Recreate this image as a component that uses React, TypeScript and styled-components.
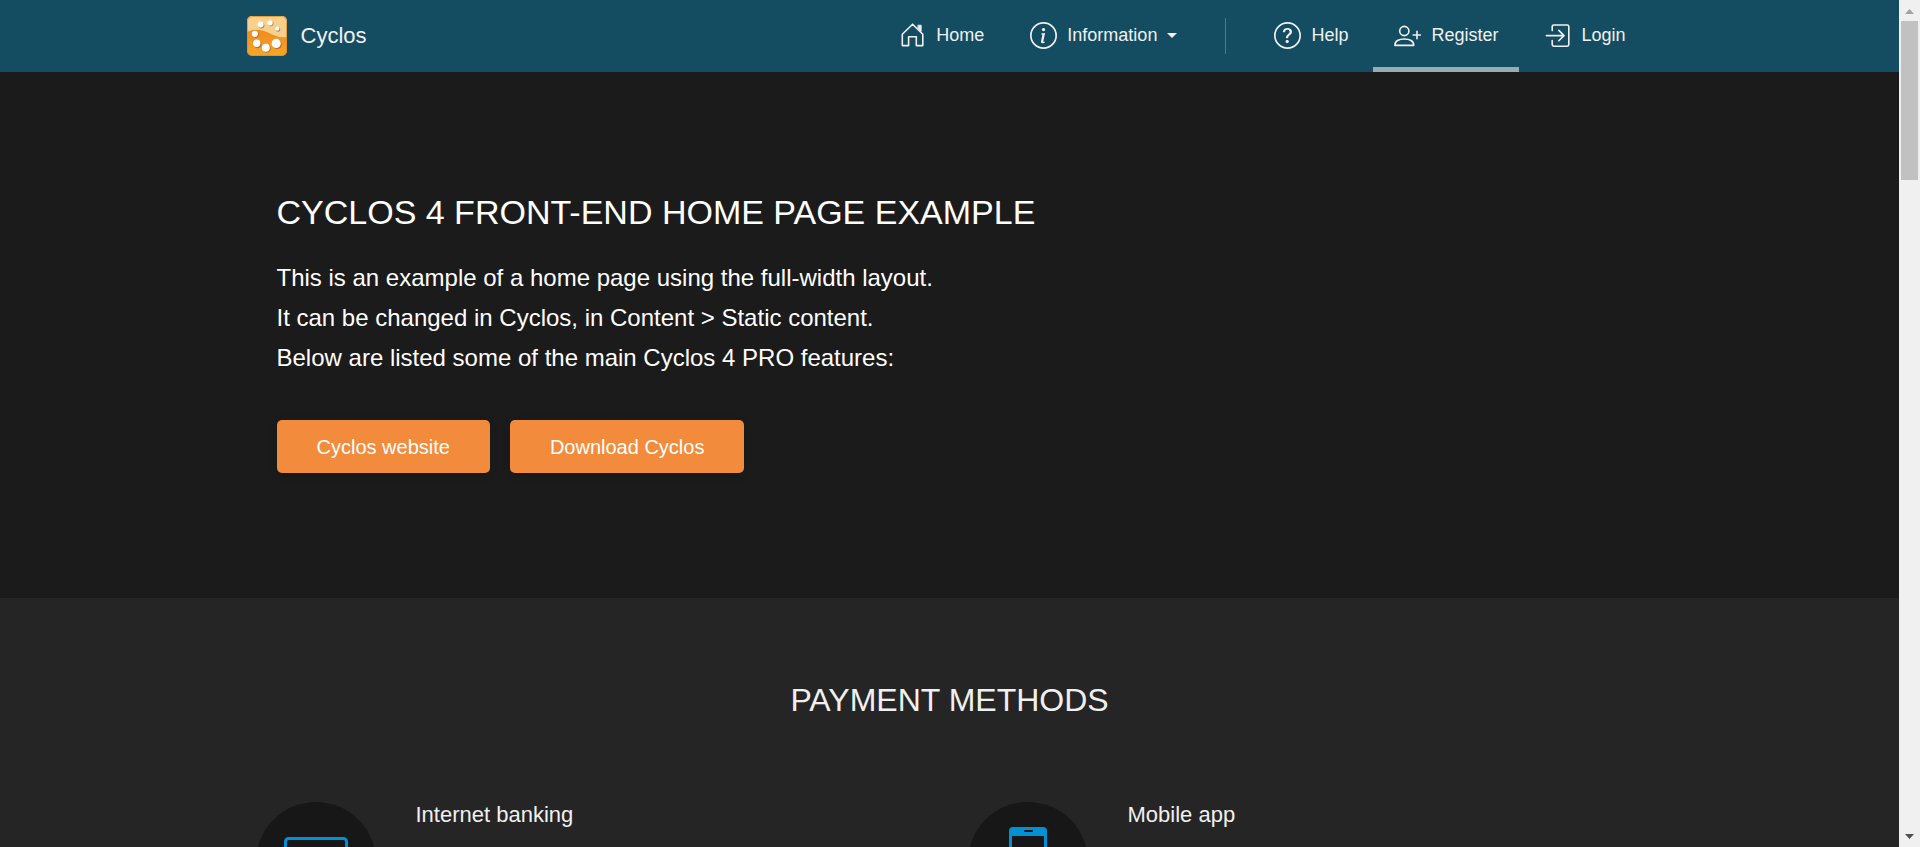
import React from "react";
import styled, { createGlobalStyle } from "styled-components";
import { BsInfoCircle, BsQuestionCircle } from "react-icons/bs";

const GlobalStyle = createGlobalStyle`
  * { box-sizing: border-box; }
  body {
    margin: 0;
    background: #1b1b1b;
    color: #f0f0f0;
    font-family: "Liberation Sans", Arial, Helvetica, sans-serif;
  }
  h1, h2, h3, p { margin: 0; font-weight: 400; }
  a { color: inherit; text-decoration: none; }
`;

const Window = styled.div`
  display: flex;
  height: 100vh;
  overflow: hidden;
`;

const Page = styled.div`
  flex: 1;
  min-width: 0;
  overflow: hidden;
`;

const Header = styled.header`
  background: #144d62;
`;

const HeaderInner = styled.div`
  display: flex;
  align-items: center;
  justify-content: space-between;
  height: 72px;
  max-width: 1406px;
  margin: 0 auto;
`;

const Brand = styled.a`
  display: flex;
  align-items: center;
  gap: 14px;
  padding-bottom: 1px;
  font-size: 22px;
  line-height: 40px;
`;

const Nav = styled.nav`
  display: flex;
  align-items: center;
  height: 100%;
  padding-right: 4px;
`;

const navItem = `
  display: flex;
  align-items: center;
  gap: 10px;
  height: 100%;
  margin: 0 2px;
  padding: 4px 21px 0;
  border: 0;
  background: none;
  color: inherit;
  font: inherit;
  font-size: 18px;
  cursor: pointer;
  svg { flex: none; }
`;

const NavLink = styled.a<{ $active?: boolean }>`
  ${navItem}
  border-bottom: 5px solid ${(p) => (p.$active ? "#97acb5" : "transparent")};
`;

const NavMenuButton = styled.button`
  ${navItem}
  border-bottom: 5px solid transparent;
`;

const Caret = styled.span`
  border: 5px solid transparent;
  border-top-color: currentColor;
  border-bottom: 0;
`;

const Divider = styled.span`
  width: 1px;
  height: 36px;
  margin: 0 25px;
  background: #4f7a89;
`;

const Hero = styled.section`
  padding: 119px 24px 125px;
  background: #1b1b1b;
  color: #fff;
`;

const HeroInner = styled.div`
  max-width: 1346px;
  margin: 0 auto;
`;

const HeroTitle = styled.h1`
  margin-bottom: 25px;
  font-size: 34px;
  line-height: 42px;
  text-transform: uppercase;
`;

const HeroText = styled.p`
  font-size: 24px;
  line-height: 40px;
`;

const Actions = styled.div`
  display: flex;
  gap: 20px;
  margin-top: 42px;
`;

const ActionLink = styled.a`
  padding: 1px 40px 0;
  border-radius: 5px;
  background: #f38b3c;
  box-shadow: 0 2px 8px rgba(0, 0, 0, 0.12);
  font-size: 20px;
  line-height: 52px;
`;

const Features = styled.section`
  padding: 82px 24px 72px;
  background: #252525;
`;

const SectionTitle = styled.h2`
  margin-bottom: 82px;
  font-size: 32px;
  line-height: 40px;
  text-align: center;
  text-transform: uppercase;
`;

const FeatureGrid = styled.div`
  display: grid;
  grid-template-columns: 1fr 1fr;
  gap: 36px;
  max-width: 1388px;
  margin: 0 auto;
`;

const Feature = styled.article`
  display: flex;
  gap: 40px;
`;

const IconDisc = styled.div`
  display: flex;
  align-items: center;
  justify-content: center;
  flex: none;
  width: 120px;
  height: 120px;
  border-radius: 50%;
  background: #171717;
`;

const FeatureTitle = styled.h3`
  font-size: 22px;
  line-height: 26px;
`;

const Scrollbar = styled.div`
  display: flex;
  flex-direction: column;
  align-items: center;
  justify-content: space-between;
  flex: none;
  width: 21px;
  padding: 9px 0 8px;
  background: #f0f0f0;
`;

const ScrollTrack = styled.div`
  flex: 1;
  width: 17px;
  margin: 7px 0;
`;

const ScrollThumb = styled.div`
  height: 159px;
  background: #c1c1c1;
`;

const LogoIcon = () => (
  <svg width="40" height="40" viewBox="0 0 40 40" aria-hidden="true">
    <defs>
      <linearGradient id="logoBase" x1="0" y1="0" x2="0" y2="1">
        <stop offset="0.3" stopColor="#f08a1c" />
        <stop offset="1" stopColor="#f5a62a" />
      </linearGradient>
      <linearGradient id="logoGloss" x1="0" y1="0" x2="0" y2="1">
        <stop offset="0" stopColor="#f9d18a" />
        <stop offset="1" stopColor="#f4cf8f" />
      </linearGradient>
    </defs>
    <rect width="40" height="40" rx="5" fill="url(#logoBase)" />
    <path d="M0 16V5a5 5 0 0 1 5-5h30a5 5 0 0 1 5 5v16c-7 1-12-1-18-4S9 12 0 16Z" fill="url(#logoGloss)" />
    <rect x="0.5" y="0.5" width="39" height="39" rx="5" fill="none" stroke="#e08a20" strokeOpacity="0.7" />
    <g fill="#8a5418" opacity="0.6">
      <circle cx="14.4" cy="9.4" r="3" />
      <circle cx="23.9" cy="7.6" r="2.6" />
      <circle cx="31" cy="13.5" r="2.2" />
      <circle cx="8.7" cy="18.6" r="3.1" />
      <circle cx="10.7" cy="28.2" r="3.7" />
      <circle cx="19.7" cy="32.6" r="4" />
      <circle cx="30.2" cy="28.4" r="4.6" />
    </g>
    <g fill="#fff">
      <circle cx="13.6" cy="8.6" r="3" />
      <circle cx="23.1" cy="6.8" r="2.6" />
      <circle cx="30.3" cy="12.7" r="2.1" />
      <circle cx="7.9" cy="17.8" r="3.1" />
      <circle cx="9.8" cy="27.3" r="3.7" />
      <circle cx="18.8" cy="31.7" r="4" />
      <circle cx="29.2" cy="27.4" r="4.6" />
    </g>
  </svg>
);

const NavSvg = ({ children }: { children: React.ReactNode }) => (
  <svg
    width="27"
    height="27"
    viewBox="0 0 27 27"
    fill="none"
    stroke="currentColor"
    strokeWidth="1.6"
    strokeLinecap="round"
    strokeLinejoin="round"
    aria-hidden="true"
  >
    {children}
  </svg>
);

const HomeIcon = () => (
  <NavSvg>
    <path d="M3.3 12.2V23.6H9.6V14.7H17.3V23.6H23.8V12.2L13.6 2.2Z" />
    <path d="M19.2 3.2h3v6.2l-3-2.8Z" fill="currentColor" strokeWidth="0.8" />
  </NavSvg>
);

const RegisterIcon = () => (
  <NavSvg>
    <circle cx="10.3" cy="9" r="4.6" />
    <path d="M.9 23.4c-.1-4.6 4-6.4 9.4-6.4s9.5 1.8 9.4 6.4Z" />
    <path d="M23 9.2v7.6M19.2 13h7.6" />
  </NavSvg>
);

const LoginIcon = () => (
  <NavSvg>
    <path d="M8.2 8.6V4.6a1.6 1.6 0 0 1 1.6-1.6h13.4a1.6 1.6 0 0 1 1.6 1.6v18a1.6 1.6 0 0 1-1.6 1.6H9.8a1.6 1.6 0 0 1-1.6-1.6v-4" />
    <path d="M2.4 13.6h17.4M14.8 8.4l5.2 5.2-5.2 5.2" />
  </NavSvg>
);

const LaptopIcon = () => (
  <svg width="84" height="50" viewBox="0 0 84 50" fill="none" stroke="#0090d4" strokeWidth="3" aria-hidden="true">
    <rect x="11.5" y="1.5" width="61" height="40" rx="3" />
    <path d="M1.5 44.5h81c0 2-2 4-5 4h-71c-3 0-5-2-5-4Z" />
  </svg>
);

const PhoneIcon = () => (
  <svg width="38" height="70" viewBox="0 0 38 70" aria-hidden="true">
    <rect width="38" height="70" rx="4" fill="#0090d4" />
    <rect x="3" y="9" width="32" height="50" fill="#171717" />
    <rect x="15" y="3" width="9" height="2" rx="1" fill="#171717" />
    <circle cx="19" cy="64" r="3" fill="#171717" />
  </svg>
);

const ArrowUp = () => (
  <svg width="9" height="5" viewBox="0 0 9 5" fill="#a3a3a3" aria-hidden="true">
    <path d="M0 5 4.5 0 9 5Z" />
  </svg>
);

const ArrowDown = () => (
  <svg width="9" height="5" viewBox="0 0 9 5" fill="#505050" aria-hidden="true">
    <path d="M0 0 4.5 5 9 0Z" />
  </svg>
);

export default function App() {
  return (
    <>
      <GlobalStyle />
      <Window>
        <Page>
          <Header>
            <HeaderInner>
              <Brand href="#">
                <LogoIcon />
                Cyclos
              </Brand>
              <Nav aria-label="Main">
                <NavLink href="#home">
                  <HomeIcon />
                  <span>Home</span>
                </NavLink>
                <NavMenuButton type="button" aria-haspopup="menu">
                  <BsInfoCircle size={27} />
                  <span>Information</span>
                  <Caret />
                </NavMenuButton>
                <Divider />
                <NavLink href="#help">
                  <BsQuestionCircle size={27} />
                  <span>Help</span>
                </NavLink>
                <NavLink href="#register" $active>
                  <RegisterIcon />
                  <span>Register</span>
                </NavLink>
                <NavLink href="#login">
                  <LoginIcon />
                  <span>Login</span>
                </NavLink>
              </Nav>
            </HeaderInner>
          </Header>
          <main>
            <Hero>
              <HeroInner>
                <HeroTitle>Cyclos 4 front-end home page example</HeroTitle>
                <HeroText>
                  This is an example of a home page using the full-width layout.
                  <br />
                  It can be changed in Cyclos, in Content &gt; Static content.
                  <br />
                  Below are listed some of the main Cyclos 4 PRO features:
                </HeroText>
                <Actions>
                  <ActionLink href="#website">Cyclos website</ActionLink>
                  <ActionLink href="#download">Download Cyclos</ActionLink>
                </Actions>
              </HeroInner>
            </Hero>
            <Features>
              <SectionTitle>Payment methods</SectionTitle>
              <FeatureGrid>
                <Feature>
                  <IconDisc>
                    <LaptopIcon />
                  </IconDisc>
                  <FeatureTitle>Internet banking</FeatureTitle>
                </Feature>
                <Feature>
                  <IconDisc>
                    <PhoneIcon />
                  </IconDisc>
                  <FeatureTitle>Mobile app</FeatureTitle>
                </Feature>
              </FeatureGrid>
            </Features>
          </main>
        </Page>
        <Scrollbar aria-hidden="true">
          <ArrowUp />
          <ScrollTrack>
            <ScrollThumb />
          </ScrollTrack>
          <ArrowDown />
        </Scrollbar>
      </Window>
    </>
  );
}
